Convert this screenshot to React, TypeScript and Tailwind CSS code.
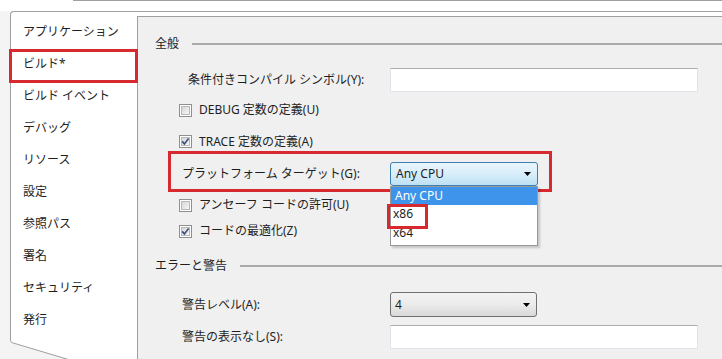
import React from 'react';

const tabs = [
  'アプリケーション',
  'ビルド*',
  'ビルド イベント',
  'デバッグ',
  'リソース',
  '設定',
  '参照パス',
  '署名',
  'セキュリティ',
  '発行',
];

function CheckBox({ checked }: { checked?: boolean }) {
  return (
    <span className="flex h-[13px] w-[13px] shrink-0 items-center justify-center border border-[#8e8f8f] bg-white">
      <span className="flex h-[9px] w-[9px] items-center justify-center border border-[#b9b9b9] bg-gradient-to-br from-[#d6d6d6] to-[#f7f7f7]">
        {checked && (
          <svg width="9" height="9" viewBox="0 0 9 9" className="overflow-visible">
            <path d="M1.2 4.4 L3.4 6.9 L7.6 1.6" fill="none" stroke="#3d4f7e" strokeWidth="1.6" />
          </svg>
        )}
      </span>
    </span>
  );
}

function Arrow() {
  return (
    <svg width="7" height="4" viewBox="0 0 7 4" className="mr-[6px]">
      <path d="M0 0 H7 L3.5 4 Z" fill="#000" />
    </svg>
  );
}

function Heading({ text }: { text: string }) {
  return (
    <div className="flex h-[20px] items-center">
      <span>{text}</span>
      <div className="ml-[13px] h-[2px] flex-1 bg-[#aaaaaa]" />
    </div>
  );
}

function TextBox() {
  return <div className="h-[24px] w-[308px] border border-[#e2e3ea] border-t-[#abadb3] bg-white" />;
}

export default function App() {
  return (
    <div className="relative h-[359px] w-[722px] overflow-hidden bg-[#f4f4f4] font-['Noto_Sans','Noto_Sans_CJK_JP',sans-serif] text-[12px] leading-none text-[#1e1e1e]">
      {/* top strip */}
      <div className="flex h-[11px] bg-white">
        <div className="ml-[73px] h-px flex-1 bg-[#a0a0a0]" />
      </div>

      <div className="flex h-[348px]">
        <div className="w-[10px] shrink-0" />

        {/* tab list */}
        <div className="w-[127px] shrink-0 rounded-tl-[4px] border-l border-t border-[#a0a0a0] bg-white pt-[4px]">
          {tabs.map((t, i) => (
            <div key={t} className="relative flex h-[32px] items-center pl-[12px]">
              {t}
              {i === 1 && (
                <div className="absolute left-[-2px] right-[-1px] top-[1px] h-[34px] border-[3px] border-[#d62930]" />
              )}
            </div>
          ))}
        </div>

        {/* panel */}
        <div className="flex flex-1 flex-col border-t border-[#a0a0a0] bg-white">
          <div className="h-[4px] shrink-0" />
          <div className="flex flex-1 flex-col border-l border-t border-[#a0a0a0] bg-[#f0f0f0] pl-[17px]">
            <div className="mt-[17px]">
              <Heading text="全般" />
            </div>

            <div className="mt-[14px] flex h-[24px] items-center">
              <span className="ml-[33px] w-[202px]">条件付きコンパイル シンボル(Y):</span>
              <TextBox />
            </div>

            <div className="mt-[8px] ml-[24px] flex h-[20px] items-center gap-[7px]">
              <CheckBox />
              <span>DEBUG 定数の定義(U)</span>
            </div>

            <div className="mt-[12px] ml-[24px] flex h-[19px] items-center gap-[7px]">
              <CheckBox checked />
              <span>TRACE 定数の定義(A)</span>
            </div>

            <div className="ml-[13px] flex h-[41px] w-[384px] items-center border-[3px] border-[#d62930] pt-[4px] pl-[11px]">
              <span className="w-[208px]">プラットフォーム ターゲット(G):</span>
              <div className="relative">
                <div className="flex h-[24px] w-[148px] items-center justify-between rounded-[3px] border border-[#3c7fb1] bg-gradient-to-b from-[#eaf5fc] via-[#d8eefa] to-[#bde0f3] pl-[5px]">
                  <span>Any CPU</span>
                  <Arrow />
                </div>
                <div className="absolute left-0 top-full z-10 h-[60px] w-[148px] border border-[#9a9a9a] bg-white shadow-[2px_2px_2px_rgba(0,0,0,0.18)]">
                  <div className="flex h-[18px] items-center overflow-hidden bg-[#3d94ea] pl-[4px] text-white">
                    Any CPU
                  </div>
                  <div className="flex h-[19px] items-center pl-[2px]">x86</div>
                  <div className="flex h-[19px] items-center pl-[2px]">x64</div>
                  <div className="absolute left-[-4px] top-[17px] h-[25px] w-[41px] border-[3px] border-[#d62930]" />
                </div>
              </div>
            </div>

            <div className="mt-[3px] ml-[24px] flex h-[20px] items-center gap-[7px]">
              <CheckBox />
              <span>アンセーフ コードの許可(U)</span>
            </div>

            <div className="mt-[6px] ml-[24px] flex h-[20px] items-center gap-[7px]">
              <CheckBox checked />
              <span>コードの最適化(Z)</span>
            </div>

            <div className="mt-[15px]">
              <Heading text="エラーと警告" />
            </div>

            <div className="mt-[16px] flex h-[25px] items-center">
              <span className="ml-[27px] w-[208px]">警告レベル(A):</span>
              <div className="flex h-[25px] w-[147px] items-center justify-between rounded-[3px] border border-[#707070] bg-gradient-to-b from-[#f3f3f3] via-[#ebebeb] to-[#d9d9d9] pl-[4px]">
                <span>4</span>
                <Arrow />
              </div>
            </div>

            <div className="mt-[8px] flex h-[24px] items-center">
              <span className="ml-[27px] w-[208px]">警告の表示なし(S):</span>
              <TextBox />
            </div>
          </div>
        </div>
      </div>

      {/* slanted bottom of the tab strip */}
      <svg width="80" height="20" viewBox="0 0 80 20" className="absolute bottom-0 left-0">
        <path d="M0 0 H11 V1.5 Q11 3 13 3.6 L72 21 H0 Z" fill="#f4f4f4" />
        <path d="M10.5 0 V1.5 Q10.5 3.2 12.8 3.9 L70 21" fill="none" stroke="#a0a0a0" strokeWidth="1" />
      </svg>
    </div>
  );
}
